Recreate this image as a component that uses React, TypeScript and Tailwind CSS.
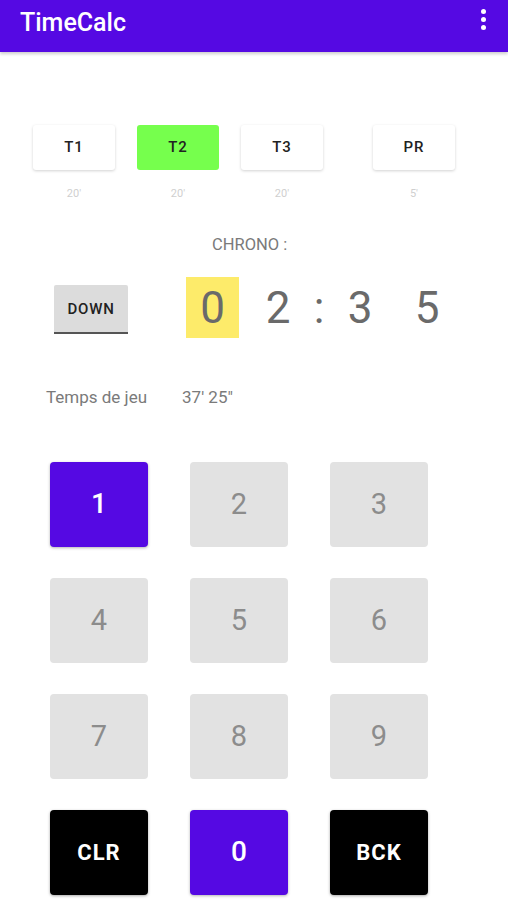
import React from "react";

const font = { fontFamily: "Roboto, 'Noto Sans', sans-serif" };

function TopBtn({ label, active }: { label: string; active?: boolean }) {
  return (
    <div
      className={`w-[82px] h-[45px] rounded-[3px] flex items-center justify-center text-[15px] font-medium tracking-[1px] text-[#222] ${
        active ? "bg-[#76ff4d]" : "bg-white shadow-[0_1px_3px_rgba(0,0,0,0.18)]"
      }`}
    >
      {label}
    </div>
  );
}

function Key({ label, kind }: { label: string; kind: "gray" | "purple" | "black" }) {
  const cls =
    kind === "gray"
      ? "bg-[#e2e2e2] text-[#8c8c8c] text-[29px]"
      : kind === "purple"
      ? "bg-[#5509e3] text-white text-[28px] font-medium shadow-[0_1px_3px_rgba(0,0,0,0.3)]"
      : "bg-black text-white text-[22px] font-bold tracking-[1px] shadow-[0_1px_3px_rgba(0,0,0,0.35)]";
  return (
    <div className={`w-[98px] h-[85px] rounded-[4px] flex items-center justify-center ${cls}`}>
      {label}
    </div>
  );
}

export default function App() {
  return (
    <div className="w-[508px] h-[900px] bg-white relative overflow-hidden" style={font}>
      <div className="h-[52px] bg-[#5509e3] flex items-center justify-between pl-[20px] pr-[22px] shadow-[0_2px_3px_rgba(0,0,0,0.2)] relative z-10">
        <span className="text-white text-[25px] font-medium -mt-[6px]">TimeCalc</span>
        <div className="flex flex-col gap-[3px] -mt-[13px]">
          <div className="w-[5px] h-[5px] rounded-full bg-white" />
          <div className="w-[5px] h-[5px] rounded-full bg-white" />
          <div className="w-[5px] h-[5px] rounded-full bg-white" />
        </div>
      </div>

      <div className="flex pl-[33px] mt-[73px]">
        <div className="flex flex-col items-center">
          <TopBtn label="T1" />
          <span className="mt-[16px] text-[11px] text-[#cfcfcf]">20'</span>
        </div>
        <div className="flex flex-col items-center ml-[22px]">
          <TopBtn label="T2" active />
          <span className="mt-[16px] text-[11px] text-[#cfcfcf]">20'</span>
        </div>
        <div className="flex flex-col items-center ml-[22px]">
          <TopBtn label="T3" />
          <span className="mt-[16px] text-[11px] text-[#cfcfcf]">20'</span>
        </div>
        <div className="flex flex-col items-center ml-[50px]">
          <TopBtn label="PR" />
          <span className="mt-[16px] text-[11px] text-[#cfcfcf]">5'</span>
        </div>
      </div>

      <div className="flex mt-[30px] pl-[212px] text-[16.5px] text-[#7a7a7a]">CHRONO :</div>

      <div className="flex items-center mt-[20px] pl-[54px] h-[61px] text-[44px] text-[#6a6a6a]">
        <div className="w-[74px] h-[49px] bg-[#dcdcdc] border-b-[2px] border-[#555] flex items-center justify-center text-[15px] font-medium tracking-[0.8px] text-[#222] rounded-t-[2px] mt-[4px]">
          DOWN
        </div>
        <div className="ml-[58px] w-[53px] h-[61px] bg-[#fdeb6a] flex items-center justify-center">0</div>
        <div className="ml-[19px] w-[40px] text-center">2</div>
        <div className="w-[42px] text-center">:</div>
        <div className="w-[40px] text-center">3</div>
        <div className="ml-[27px] w-[40px] text-center">5</div>
      </div>

      <div className="flex items-center mt-[47px] pl-[46px] text-[17px] text-[#7a7a7a]">
        <span>Temps de jeu</span>
        <span className="ml-[35px]">37' 25"</span>
      </div>

      <div className="grid grid-cols-[98px_98px_98px] gap-x-[42px] gap-y-[31px] pl-[50px] mt-[51px]">
        <Key label="1" kind="purple" />
        <Key label="2" kind="gray" />
        <Key label="3" kind="gray" />
        <Key label="4" kind="gray" />
        <Key label="5" kind="gray" />
        <Key label="6" kind="gray" />
        <Key label="7" kind="gray" />
        <Key label="8" kind="gray" />
        <Key label="9" kind="gray" />
        <Key label="CLR" kind="black" />
        <Key label="0" kind="purple" />
        <Key label="BCK" kind="black" />
      </div>
    </div>
  );
}
